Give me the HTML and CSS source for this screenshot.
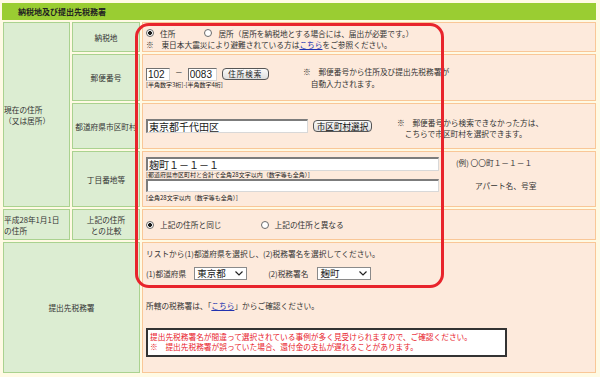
FILE: index.html
```html
<!DOCTYPE html>
<html lang="ja">
<head>
<meta charset="utf-8">
<title>納税地及び提出先税務署</title>
<link rel="stylesheet" href="styles.css">
</head>
<body>
<div class="page">
  <div class="header">納税地及び提出先税務署</div>
  <div class="form">
    <div class="cell label group">現在の住所<br>（又は居所）</div>

    <div class="cell label sub">納税地</div>
    <div class="cell content col r1">
      <div class="line">
        <label class="opt first"><input type="radio" name="nz" checked>住所</label>
        <label class="opt"><input type="radio" name="nz">居所（居所を納税地とする場合には、届出が必要です。）</label>
      </div>
      <div class="line">※　東日本大震災により避難されている方は<a href="#" class="link">こちら</a>をご参照ください。</div>
    </div>

    <div class="cell label sub">郵便番号</div>
    <div class="cell content r2">
      <div class="zip">
        <div class="ziprow">
          <input type="text" class="tb zip1" value="102">
          <span class="dash">－</span>
          <input type="text" class="tb zip2" value="0083">
          <button type="button" class="btn btn-zip">住所検索</button>
        </div>
        <div class="note">[半角数字3桁]-[半角数字4桁]</div>
      </div>
      <div class="hint hint2">※　郵便番号から住所及び提出先税務署が<br>　自動入力されます。</div>
    </div>

    <div class="cell label sub">都道府県市区町村</div>
    <div class="cell content r3">
      <input type="text" class="tb tb2 city" value="東京都千代田区">
      <button type="button" class="btn btn-city">市区町村選択</button>
      <div class="hint hint3">※　郵便番号から検索できなかった方は、<br>　こちらで市区町村を選択できます。</div>
    </div>

    <div class="cell label sub">丁目番地等</div>
    <div class="cell content r4">
      <div class="addr">
        <input type="text" class="tb tb2 addr1" value="麹町１－１－１">
        <div class="ex ex1">(例)&nbsp;〇〇町１－１－１</div>
        <div class="note note1">[都道府県市区町村と合計で全角28文字以内（数字等も全角）]</div>
        <input type="text" class="tb tb2 addr2" value="">
        <div class="ex ex2">アパート名、号室</div>
        <div class="note note2">[全角28文字以内（数字等も全角）]</div>
      </div>
    </div>

    <div class="cell label left">平成28年1月1日<br>の住所</div>
    <div class="cell label sub">上記の住所<br>との比較</div>
    <div class="cell content r5">
      <label class="opt same"><input type="radio" name="cmp" checked>上記の住所と同じ</label>
      <label class="opt"><input type="radio" name="cmp">上記の住所と異なる</label>
    </div>

    <div class="cell label sub wide">提出先税務署</div>
    <div class="cell content col r6">
      <div class="line">リストから(1)都道府県を選択し、(2)税務署名を選択してください。</div>
      <div class="selrow">
        <span>(1)都道府県</span>
        <span class="sel sel1">東京都<svg class="chev" viewBox="0 0 8 5" width="8" height="5"><polyline points="0.5,0.5 4,4 7.5,0.5" fill="none" stroke="#222" stroke-width="1.2"/></svg></span>
        <span class="lab2">(2)税務署名</span>
        <span class="sel sel2">麹町<svg class="chev" viewBox="0 0 8 5" width="8" height="5"><polyline points="0.5,0.5 4,4 7.5,0.5" fill="none" stroke="#222" stroke-width="1.2"/></svg></span>
      </div>
      <div class="line check">所轄の税務署は、「<a href="#" class="link">こちら</a>」からご確認ください。</div>
      <div class="warn">提出先税務署名が間違って選択されている事例が多く見受けられますので、ご確認ください。<br>※　提出先税務署が誤っていた場合、還付金の支払が遅れることがあります。</div>
    </div>
  </div>
  <div class="highlight"></div>
</div>
</body>
</html>
```

FILE: styles.css
```css
body {
  margin: 0;
  background: #fffae4;
  font-family: "Noto Sans CJK JP", sans-serif;
  font-size: 7.7px;
  line-height: 11px;
  color: #333;
}

.page {
  position: relative;
  width: 594px;
  padding: 3px 0 0 2px;
}

.header {
  height: 17px;
  background: #9acd32;
  color: #222;
  font-weight: bold;
  font-size: 8px;
  padding-left: 16px;
  display: flex;
  align-items: center;
}

.form {
  margin: 2px 0 0 1px;
  display: grid;
  grid-template-columns: 67px 68px 454px;
  grid-template-rows: 30px 47px 46px 56px 31px 131px;
  gap: 2px;
}

.cell {
  box-sizing: border-box;
  border: 1px solid;
  display: flex;
  align-items: center;
}

.label {
  background: #dcedd2;
  border-color: #aad28f;
  color: #333;
}

.sub {
  justify-content: center;
  text-align: center;
}

.group {
  grid-row: span 4;
}

.wide {
  grid-column: span 2;
}

.content {
  background: #fdeadc;
  border-color: #f9c797;
  padding-left: 3px;
}

.col {
  flex-direction: column;
  align-items: flex-start;
  justify-content: center;
}

.r1 {
  padding-top: 3px;
}

.line {
  display: flex;
  align-items: center;
  white-space: nowrap;
}

.link {
  color: #2233b0;
  text-decoration: underline;
}

.opt {
  display: inline-flex;
  align-items: center;
  gap: 6px;
  white-space: nowrap;
}

.opt.first {
  margin-right: 29px;
}

.opt.same {
  margin-right: 39px;
}

input[type="radio"] {
  appearance: none;
  -webkit-appearance: none;
  box-sizing: border-box;
  width: 8px;
  height: 8px;
  margin: 0;
  border: 1px solid #6a6a6a;
  border-radius: 50%;
  background: #fff;
}

input[type="radio"]:checked {
  background: radial-gradient(circle, #1a1a1a 0 1.7px, #fff 2.2px);
}

/* text boxes */
.tb {
  box-sizing: border-box;
  margin: 0;
  padding: 0 1px;
  border: 1px solid #d4d4d4;
  border-top-color: #707070;
  border-left-color: #707070;
  background: #fff;
  color: #1a1a1a;
  font-family: "Liberation Sans", "Noto Sans CJK JP", sans-serif;
  font-size: 10px;
  height: 13px;
  outline: none;
}

.tb2 {
  border-width: 2px 1px 1px 2px;
  border-color: #7c7c7c #d8d8d8 #d8d8d8 #7c7c7c;
  font-family: "Noto Sans CJK JP", sans-serif;
  font-size: 10px;
  padding: 0 1px;
}

.btn {
  box-sizing: border-box;
  margin: 0;
  padding: 0;
  border: 1px solid #555;
  border-radius: 4px;
  background: linear-gradient(#fafafa, #dedede);
  color: #222;
  font-family: "Noto Sans CJK JP", sans-serif;
  height: 12px;
  line-height: 10px;
}

/* row 2 */
.r2 {
  align-items: center;
}

.zip {
  width: 157px;
  flex: none;
  padding-top: 1px;
}

.ziprow {
  display: flex;
  align-items: center;
  height: 13px;
}

.zip1 {
  width: 24px;
}

.zip2 {
  width: 29px;
}

.dash {
  font-size: 7.7px;
  margin: 0 5px;
  line-height: 8px;
  align-self: flex-start;
}

.btn-zip {
  width: 47px;
  margin-left: 5px;
  font-size: 7.5px;
  letter-spacing: 1px;
}

.note {
  font-size: 6px;
  line-height: 8px;
  white-space: nowrap;
  color: #222;
}

.hint {
  white-space: nowrap;
}

.hint2 {
  line-height: 12px;
}

/* row 3 */
.city {
  width: 162px;
  height: 14px;
}

.btn-city {
  width: 59px;
  margin-left: 5px;
  font-size: 8.6px;
  color: #111;
}

.hint3 {
  margin-left: 25px;
  padding-top: 3px;
}

/* row 4 */
.addr {
  display: grid;
  grid-template-columns: 293px 84px;
  grid-template-rows: 14px 8px 13px 10px;
  column-gap: 17px;
  align-items: center;
}

.addr1 {
  grid-column: 1;
  grid-row: 1;
  width: 293px;
  height: 14px;
}

.ex {
  grid-column: 2;
  white-space: nowrap;
}

.ex1 {
  grid-row: 1;
  margin-top: -3px;
}

.ex2 {
  grid-row: 3;
  padding-left: 19px;
}

.note1 {
  grid-column: 1;
  grid-row: 2;
}

.addr2 {
  grid-column: 1;
  grid-row: 3;
  width: 293px;
  height: 13px;
}

.note2 {
  grid-column: 1;
  grid-row: 4;
  align-self: end;
}

/* row 5 */
.left {
  padding-left: 0;
}

/* row 6 */
.r6 {
  justify-content: flex-start;
  padding-top: 5px;
}

.selrow {
  display: flex;
  align-items: center;
  margin-top: 8px;
  height: 13px;
  white-space: nowrap;
}

.sel {
  box-sizing: border-box;
  display: inline-flex;
  align-items: center;
  justify-content: space-between;
  height: 13px;
  border: 1px solid #8a8a8a;
  background: #fff;
  color: #1a1a1a;
  font-size: 9.5px;
  padding: 0 3px 0 2px;
}

.sel1 {
  width: 53px;
  margin-left: 8px;
}

.lab2 {
  margin-left: 21px;
}

.sel2 {
  width: 54px;
  margin-left: 9px;
}

.chev {
  display: block;
}

.check {
  margin-top: 20px;
}

.warn {
  box-sizing: border-box;
  width: 361px;
  margin-top: 17px;
  border: 2px solid #333;
  background: #fff;
  color: #e8202a;
  line-height: 10px;
  padding: 2px 2px 3px 2px;
  white-space: nowrap;
}

/* red annotation frame drawn over the form */
.highlight {
  position: absolute;
  left: 135px;
  top: 23px;
  width: 309px;
  height: 265px;
  box-sizing: border-box;
  border: 3px solid #e8242c;
  border-radius: 14px;
  pointer-events: none;
}
```
